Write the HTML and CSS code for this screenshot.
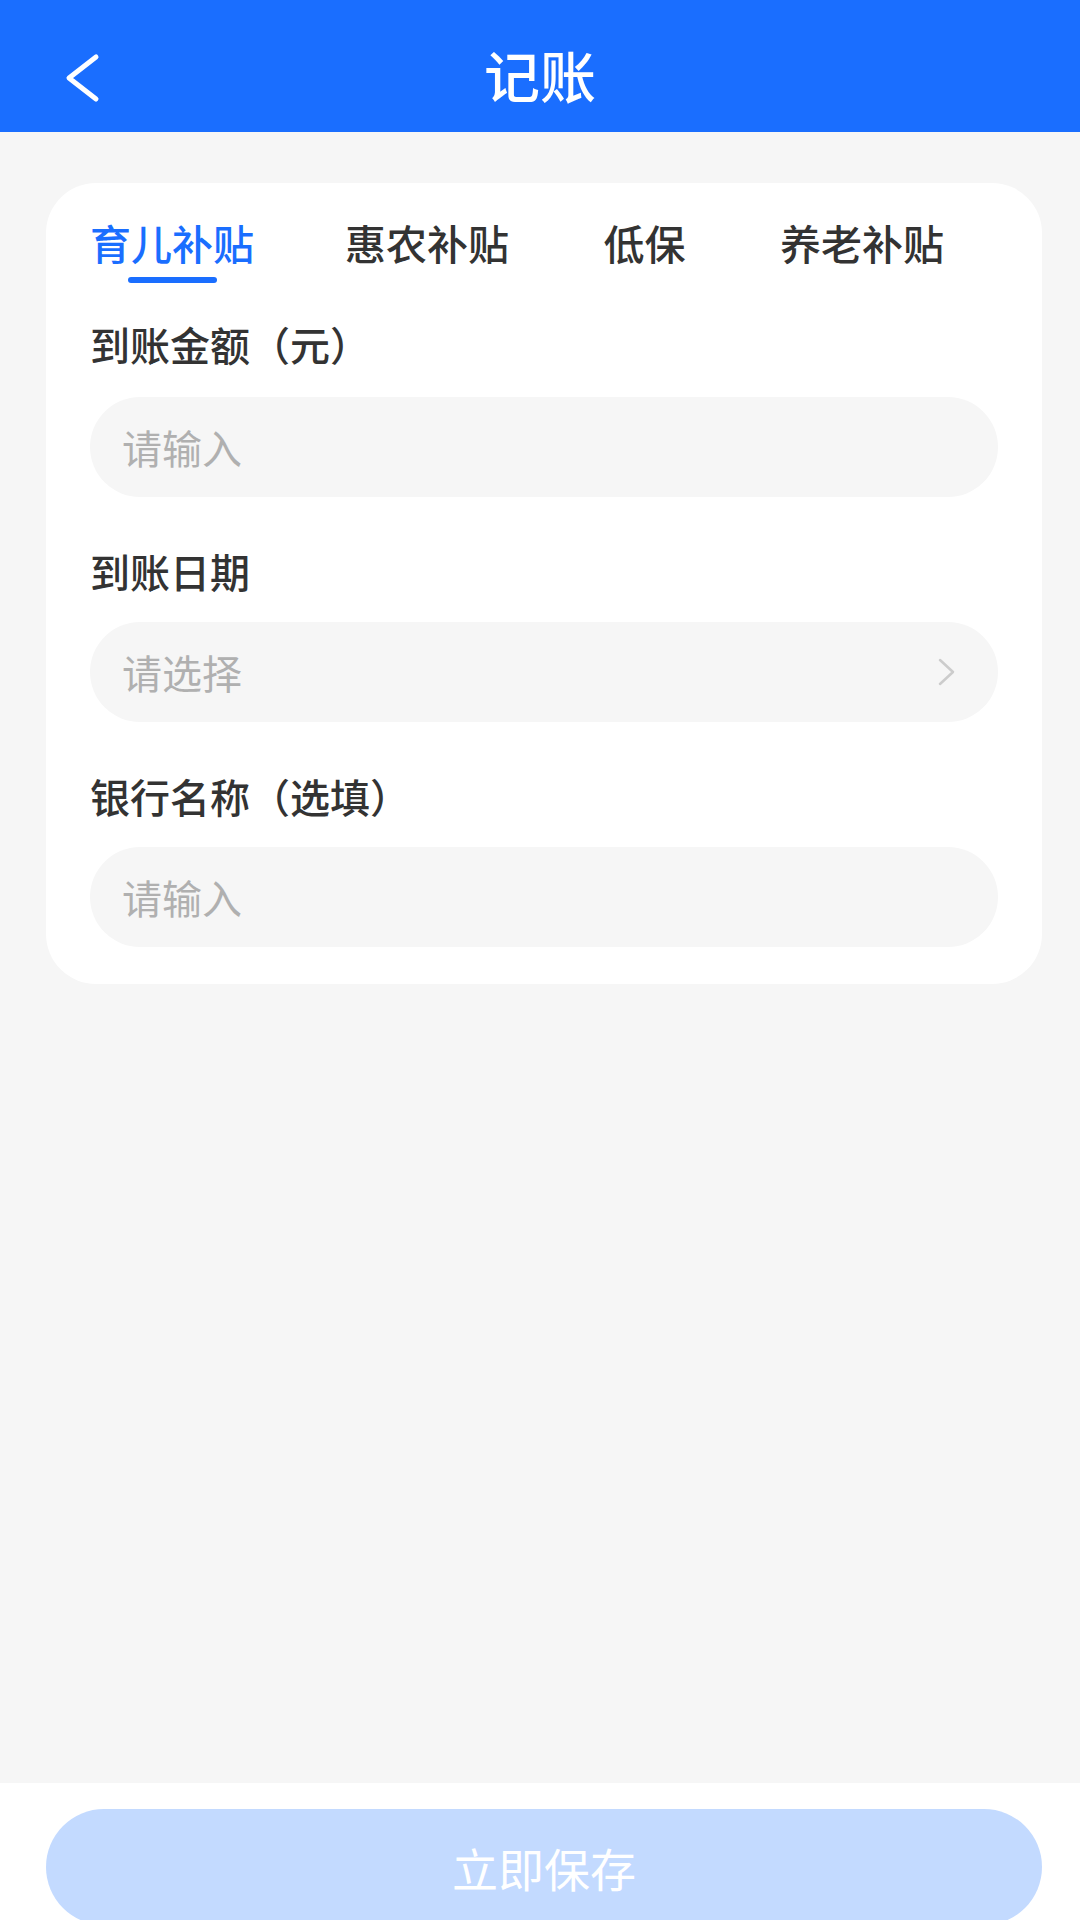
FILE: index.html
```html
<!DOCTYPE html>
<html lang="zh-CN">
<head>
    <meta charset="UTF-8">
    <meta name="viewport" content="width=device-width, initial-scale=1.0">
    <title>记账</title>
    <link rel="stylesheet" href="styles.css">
</head>
<body>

    <div class="header">
        <button class="back-btn" aria-label="返回">
            <svg width="40" height="50" viewBox="0 0 40 50">
                <polyline points="33,4 6,25 33,46" fill="none" stroke="#fff" stroke-width="5" stroke-linecap="round" stroke-linejoin="round"/>
            </svg>
        </button>
        <h1>记账</h1>
    </div>

    <div class="main">
        <div class="card">
            <div class="tabs">
                <div class="tab active">育儿补贴</div>
                <div class="tab">惠农补贴</div>
                <div class="tab">低保</div>
                <div class="tab">养老补贴</div>
            </div>

            <div class="field first">
                <div class="field-label">到账金额（元）</div>
                <input class="field-input" type="text" placeholder="请输入">
            </div>

            <div class="field">
                <div class="field-label">到账日期</div>
                <div class="field-input select">
                    <span class="placeholder">请选择</span>
                    <svg class="arrow" width="22" height="28" viewBox="0 0 22 28">
                        <polyline points="4,2 17,14 4,26" fill="none" stroke="#cccccc" stroke-width="2.5" stroke-linecap="round" stroke-linejoin="round"/>
                    </svg>
                </div>
            </div>

            <div class="field">
                <div class="field-label">银行名称（选填）</div>
                <input class="field-input" type="text" placeholder="请输入">
            </div>
        </div>
    </div>

    <div class="footer">
        <button class="save-btn">立即保存</button>
    </div>

</body>
</html>
```

FILE: styles.css
```css
        body {
            font-family: "Noto Sans CJK SC", "Noto Sans", sans-serif;
            background-color: #f6f6f6;
            margin: 0;
            height: 100vh;
            display: flex;
            flex-direction: column;
            overflow: hidden;
        }
        .header {
            height: 132px;
            background-color: #1a6eff;
            display: flex;
            align-items: center;
            justify-content: center;
            position: relative;
            flex-shrink: 0;
        }
        .header h1 {
            margin: 0;
            color: white;
            font-size: 56px;
            font-weight: 500;
            padding-top: 14px;
        }
        .back-btn {
            position: absolute;
            left: 63px;
            top: 53px;
            background: none;
            border: none;
            padding: 0;
            cursor: pointer;
        }
        .main {
            flex: 1;
        }
        .card {
            margin: 51px 38px 0 46px;
            background-color: white;
            border-radius: 50px;
            padding: 34px 44px 37px;
        }
        .tabs {
            display: flex;
            gap: 91px;
        }
        .tab {
            font-size: 41px;
            line-height: 50px;
            font-weight: 500;
            color: #333;
            display: flex;
            flex-direction: column;
            align-items: center;
        }
        .tab::after {
            content: "";
            width: 89px;
            height: 6px;
            margin-top: 10px;
            border-radius: 3px;
            background-color: transparent;
        }
        .tab.active {
            color: #1a6eff;
        }
        .tab.active::after {
            background-color: #1a6eff;
        }
        .field {
            margin-top: 49px;
        }
        .field.first {
            margin-top: 36px;
        }
        .field-label {
            font-size: 40px;
            line-height: 50px;
            font-weight: 500;
            color: #333;
            margin-bottom: 26px;
        }
        .field.first .field-label {
            margin-bottom: 28px;
        }
        .field-input {
            display: block;
            box-sizing: border-box;
            width: 100%;
            height: 100px;
            border: none;
            border-radius: 50px;
            background-color: #f6f6f6;
            padding: 0 40px 0 32px;
            font-family: inherit;
            font-size: 40px;
            color: #333;
            outline: none;
        }
        .field-input::placeholder {
            color: #b0b0b0;
        }
        .select {
            display: flex;
            align-items: center;
            justify-content: space-between;
        }
        .placeholder {
            color: #b0b0b0;
        }
        .footer {
            height: 137px;
            box-sizing: border-box;
            background-color: white;
            padding: 26px 38px 0 46px;
            overflow: hidden;
            flex-shrink: 0;
        }
        .save-btn {
            width: 100%;
            height: 116px;
            border: none;
            border-radius: 58px;
            background-color: #c3daff;
            color: white;
            font-family: inherit;
            font-size: 46px;
            font-weight: 400;
            cursor: pointer;
        }
```
